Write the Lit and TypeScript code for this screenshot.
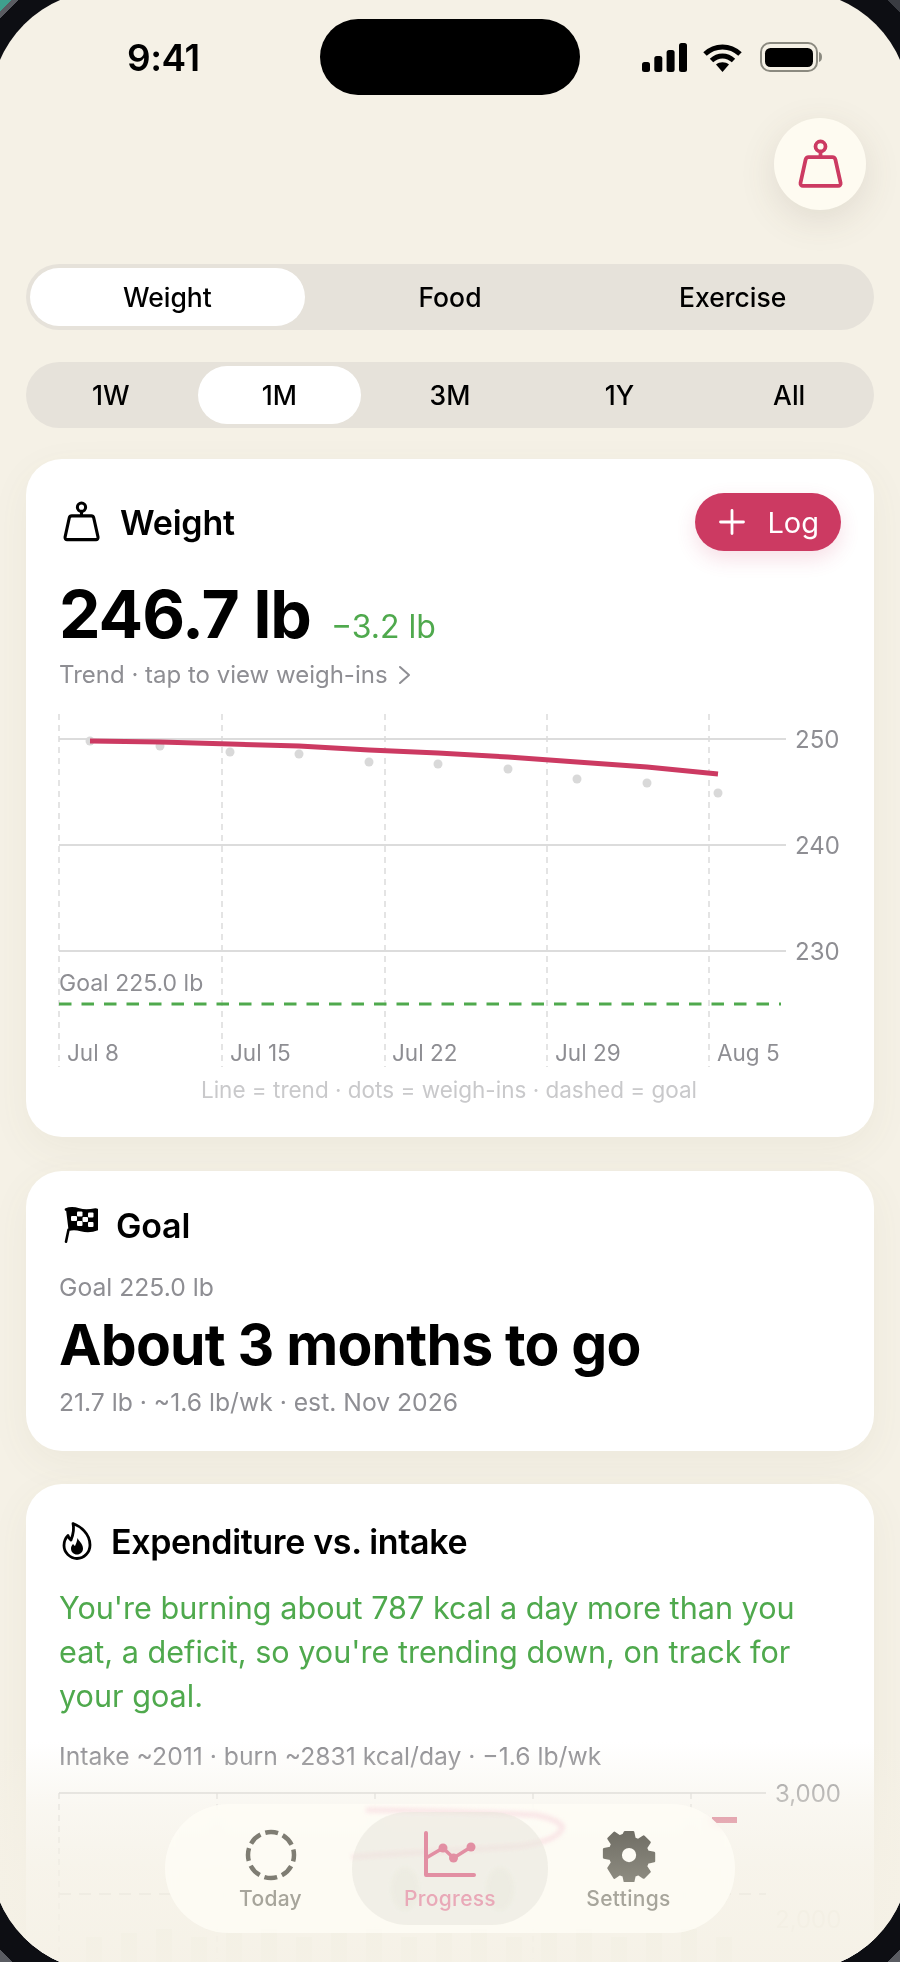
import { LitElement, css, html, svg } from "lit";
import { customElement } from "lit/decorators.js";

const trend = "90,741 160,742 230,744 299,746 369,750 438,753 508,757 577,762 647,767 718,774";
const dots = [
  [90, 741], [160, 746], [230, 752], [299, 754], [369, 762],
  [438, 764], [508, 769], [577, 779], [647, 783], [718, 793],
];
const weekTicks = [59, 222, 385, 547, 709];

const weightIcon = (color: string, width: number) => html`
  <svg viewBox="0 0 36 40" width=${width} height=${width * 1.111} fill="none" stroke=${color} stroke-width="3" stroke-linejoin="round">
    <circle cx="18" cy="6" r="4"></circle>
    <path d="M18 10v4"></path>
    <path d="M8.5 14.5h19a2.5 2.5 0 0 1 2.4 1.9l4.2 18.8a2 2 0 0 1-2 2.4H4a2 2 0 0 1-2-2.4L6.100 16.400a2.500 2.500 0 0 1 2.400-1.900z"></path>
  </svg>
`;

@customElement("app-root")
export class AppRoot extends LitElement {
  static styles = css`
    :host {
      display: block;
      position: relative;
      width: 900px;
      height: 1962px;
      overflow: hidden;
      background:
        linear-gradient(135deg, #3fa08e 0 8px, #5a5c62 8px 13px, transparent 13px),
        linear-gradient(45deg, #5a5c62 0 9px, transparent 9px),
        linear-gradient(225deg, #3a3c42 0 9px, transparent 9px),
        linear-gradient(315deg, #5a5c62 0 9px, transparent 9px),
        #0d0e13;
      font-family: Inter, "Liberation Sans", sans-serif;
      color: #000;
    }

    /* screen is a bit bigger than the window so only part of its corner arc shows */
    .screen {
      position: relative;
      box-sizing: border-box;
      width: 920px;
      height: 1982px;
      margin: -10px;
      padding: 10px;
      overflow: hidden;
      border-radius: 117px;
      background: #f5f1e6;
      filter: blur(0.4px);
    }

    .status {
      display: grid;
      grid-template-columns: 320px 260px 320px;
      align-items: center;
      height: 76px;
      margin-top: 19px;
    }

    .time {
      padding-left: 127px;
      font-size: 37px;
      font-weight: 600;
      letter-spacing: -0.5px;
    }

    .island {
      height: 76px;
      border-radius: 38px;
      background: #000;
    }

    .status-icons {
      display: flex;
      align-items: center;
      gap: 16px;
      padding-left: 62px;
    }

    .battery {
      margin-left: 2px;
    }

    .top-action {
      display: flex;
      justify-content: flex-end;
      margin-top: 23px;
      padding-right: 34px;
    }

    .round-btn {
      display: grid;
      place-items: center;
      width: 92px;
      height: 92px;
      border-radius: 50%;
      background: #fefbf1;
      box-shadow: 0 10px 36px rgba(90, 80, 60, 0.13);
    }

    .tabs {
      display: grid;
      margin: 0 26px;
      height: 66px;
      border-radius: 33px;
      background: #e6e2da;
      align-items: center;
      font-size: 26.500px;
      font-weight: 500;
      text-align: center;
    }

    .tabs.kinds {
      grid-template-columns: repeat(3, 1fr);
      margin-top: 54px;
    }

    .tabs.ranges {
      grid-template-columns: repeat(5, 1fr);
      margin-top: 32px;
    }

    .tab {
      display: grid;
      place-items: center;
      height: 58px;
      margin: 0 4px;
      border-radius: 29px;
    }

    .tab.on {
      background: #fff;
    }

    .ranges .tab.on {
      margin-left: 2px;
    }

    .card {
      margin: 0 26px;
      border-radius: 36px;
      background: #fff;
      box-shadow: 0 12px 40px rgba(110, 95, 60, 0.06);
    }

    .weight-card {
      height: 678px;
      margin-top: 31px;
      padding: 34px 33px 0;
      box-sizing: border-box;
    }

    .card-head {
      display: flex;
      align-items: center;
      gap: 20px;
      font-size: 34px;
      font-weight: 600;
      letter-spacing: -0.2px;
    }

    .weight-head {
      justify-content: space-between;
      height: 58px;
    }

    .title {
      display: flex;
      align-items: center;
      gap: 20px;
      padding-left: 4px;
    }

    .log {
      display: flex;
      align-items: center;
      gap: 22px;
      height: 58px;
      padding: 0 22px 0 24px;
      border-radius: 29px;
      background: #cc3a62;
      color: #fff;
      font-size: 29px;
      font-weight: 400;
      letter-spacing: 0;
      box-shadow: 0 8px 20px rgba(204, 58, 98, 0.16);
    }

    .reading {
      display: flex;
      align-items: baseline;
      gap: 20px;
      margin-top: 24px;
      line-height: 78px;
      font-size: 66px;
      font-weight: 700;
      letter-spacing: -1px;
    }

    .delta {
      color: #4fa94d;
      font-size: 32px;
      font-weight: 400;
      letter-spacing: 0;
    }

    .muted {
      color: #8e8e93;
      font-size: 24.700px;
      line-height: 32px;
    }

    .trend-note {
      display: flex;
      align-items: center;
      gap: 10px;
      margin-top: -7px;
      font-size: 24px;
    }

    .chart {
      display: block;
      margin-left: -59px;
      overflow: visible;
    }

    .chart.weight {
      margin-top: 14.500px;
    }

    .chart.burn {
      margin-top: 11px;
    }

    .chart text {
      font-family: Inter, "Liberation Sans", sans-serif;
    }

    .goal-card {
      height: 280px;
      margin-top: 34px;
      padding: 36px 33px 0;
      box-sizing: border-box;
    }

    .goal-head {
      gap: 18px;
      padding-left: 4px;
      height: 36px;
    }

    .goal-for {
      margin-top: 28px;
    }

    .goal-big {
      margin-top: 3px;
      font-size: 57px;
      font-weight: 700;
      line-height: 78px;
      letter-spacing: -0.8px;
    }

    .goal-sub {
      margin-top: 2px;
    }

    .burn-card {
      height: 560px;
      margin-top: 33px;
      padding: 38px 33px 0;
      box-sizing: border-box;
    }

    .burn-head {
      gap: 19px;
      padding-left: 3px;
      height: 38px;
      letter-spacing: -0.35px;
    }

    .burn-text {
      margin: 26px 0 0;
      color: #4fa94d;
      font-size: 30.600px;
      line-height: 44px;
    }

    .burn-sub {
      margin-top: 21.500px;
    }

    .fade {
      position: absolute;
      left: 0;
      right: 0;
      bottom: 0;
      height: 230px;
      background: linear-gradient(
        to bottom,
        rgba(245, 241, 230, 0) 0%,
        rgba(245, 241, 230, 0.55) 28%,
        rgba(245, 241, 230, 0.82) 55%,
        rgba(245, 241, 230, 0.97) 100%
      );
    }

    .nav {
      position: absolute;
      left: 175px;
      top: 1814px;
      display: grid;
      grid-template-columns: 187px 196px 187px;
      width: 570px;
      height: 129px;
      border-radius: 64px;
      background: rgba(255, 253, 246, 0.72);
      backdrop-filter: blur(6px);
      overflow: hidden;
    }

    .glass {
      position: absolute;
      left: 0;
      top: 0;
      filter: blur(2px);
    }

    .nav-item {
      position: relative;
      display: flex;
      flex-direction: column;
      align-items: center;
      gap: 4px;
      height: 113px;
      margin-top: 8px;
      padding-top: 16px;
      box-sizing: border-box;
      border-radius: 56px;
      color: #a7a59b;
      font-size: 21px;
      font-weight: 500;
      letter-spacing: 0.3px;
    }

    .nav-item svg {
      display: block;
    }

    .nav-item.today {
      margin-left: 12px;
      margin-right: -12px;
    }

    .nav-item.on {
      background: rgba(232, 229, 220, 0.55);
      color: #e9a9b8;
    }

    .nav-item.settings {
      margin-left: -13px;
      margin-right: 13px;
    }
  `;

  private weightChart() {
    return html`
      <svg class="chart weight" width="860" height="400" viewBox="0 706 860 400">
        ${weekTicks.map(
          (x) => svg`<line x1=${x} x2=${x} y1="714" y2="1067" stroke="#d2d2d2" stroke-width="1.200" stroke-dasharray="6 5"></line>`
        )}
        ${[739, 845, 951].map(
          (y) => svg`<line x1="59" x2="786" y1=${y} y2=${y} stroke="#dcdcdc" stroke-width="2"></line>`
        )}
        ${[[739, "250"], [845, "240"], [951, "230"]].map(
          ([y, label]) => svg`<text x="795" y=${Number(y) + 9} font-size="24" fill="#8e8e93">${label}</text>`
        )}
        <text x="59" y="991" font-size="23" fill="#8e8e93">Goal 225.0 lb</text>
        <line x1="59" x2="781" y1="1004" y2="1004" stroke="#4fa94d" stroke-width="3" stroke-dasharray="12.500 10"></line>
        ${dots.map(([x, y]) => svg`<circle cx=${x} cy=${y} r="4.500" fill="#d9d9d9"></circle>`)}
        <polyline points=${trend} fill="none" stroke="#cc3a62" stroke-width="5"></polyline>
        ${[[67, "Jul 8"], [230, "Jul 15"], [392, "Jul 22"], [555, "Jul 29"], [717, "Aug 5"]].map(
          ([x, label]) => svg`<text x=${x} y="1061" font-size="22.500" fill="#8e8e93">${label}</text>`
        )}
        <text x="449" y="1098" font-size="22.500" fill="#c9c9cb" text-anchor="middle">Line = trend · dots = weigh-ins · dashed = goal</text>
      </svg>
    `;
  }

  private burnChart() {
    return html`
      <svg class="chart burn" width="860" height="190" viewBox="0 1784 860 190">
        <line x1="59" x2="766" y1="1794" y2="1794" stroke="#dcdcdc" stroke-width="2"></line>
        ${[59, 217, 375, 533, 691].map(
          (x) => svg`<line x1=${x} x2=${x} y1="1794" y2="1960" stroke="#d2d2d2" stroke-width="1.200" stroke-dasharray="6 5"></line>`
        )}
        <line x1="59" x2="766" y1="1895" y2="1895" stroke="#cfcfcf" stroke-width="2" stroke-dasharray="12 8"></line>
        <text x="775" y="1803" font-size="24" fill="#8e8e93">3,000</text>
        <text x="775" y="1929" font-size="24" fill="#e6e4da">2,000</text>
        <line x1="712" x2="737" y1="1821" y2="1821" stroke="#cc3a62" stroke-width="6"></line>
        ${Array.from({ length: 19 }, (_, i) => i).map(
          (i) => svg`<rect x=${86 + i * 35} y=${1938 - (i % 3) * 4} width="16" height="34" fill="#e6ebdc"></rect>`
        )}
      </svg>
    `;
  }

  protected override render() {
    return html`
      <div class="screen">
        <div class="status">
          <div class="time">9:41</div>
          <div class="island"></div>
          <div class="status-icons">
            <svg width="45" height="29" viewBox="0 0 45 29" fill="#000">
              <rect x="0" y="19" width="8" height="10" rx="2.500"></rect>
              <rect x="12.300" y="13" width="8" height="16" rx="2.500"></rect>
              <rect x="24.600" y="7" width="8" height="22" rx="2.500"></rect>
              <rect x="37" y="0" width="8" height="29" rx="2.500"></rect>
            </svg>
            <svg width="39" height="29" viewBox="0 0 39 29" fill="none" stroke="#000" stroke-width="5">
              <path d="M2 11c10-9.500 25-9.500 35 0"></path>
              <path d="M8.500 17.500c6.500-6 15.500-6 22 0"></path>
              <path d="M19.500 29l-6.500-7.500c3.500-3 9.500-3 13 0z" fill="#000" stroke="none"></path>
            </svg>
            <svg class="battery" width="62" height="30" viewBox="0 0 62 30">
              <rect x="1" y="1" width="56" height="28" rx="9" fill="none" stroke="#8b8a80" stroke-width="2"></rect>
              <rect x="5" y="6" width="48" height="19" rx="5.500" fill="#000"></rect>
              <path d="M59 10c2 .5 3 2.500 3 5s-1 4.500-3 5z" fill="#8b8a80"></path>
            </svg>
          </div>
        </div>

        <div class="top-action">
          <div class="round-btn">${weightIcon("#cc3a62", 45)}</div>
        </div>

        <div class="tabs kinds">
          <div class="tab on">Weight</div>
          <div class="tab">Food</div>
          <div class="tab">Exercise</div>
        </div>

        <div class="tabs ranges">
          <div class="tab">1W</div>
          <div class="tab on">1M</div>
          <div class="tab">3M</div>
          <div class="tab">1Y</div>
          <div class="tab">All</div>
        </div>

        <section class="card weight-card">
          <div class="card-head weight-head">
            <div class="title">${weightIcon("#000", 37)}<span>Weight</span></div>
            <div class="log">
              <svg width="26" height="26" viewBox="0 0 26 26" stroke="#fff" stroke-width="2.800" stroke-linecap="round">
                <path d="M13 1.500v23M1.500 13h23"></path>
              </svg>
              <span>Log</span>
            </div>
          </div>
          <div class="reading"><span>246.7 lb</span><span class="delta">−3.2 lb</span></div>
          <div class="muted trend-note">
            <span>Trend · tap to view weigh-ins</span>
            <svg width="13" height="20" viewBox="0 0 13 20" fill="none" stroke="#8e8e93" stroke-width="2" stroke-linecap="round" stroke-linejoin="round">
              <path d="M2 2l9 8-9 8"></path>
            </svg>
          </div>
          ${this.weightChart()}
        </section>

        <section class="card goal-card">
          <div class="card-head goal-head">
            <svg width="35" height="36" viewBox="0 0 35 36">
              <path d="M3 2.500c5-2 8-1.500 13 0s9 1.500 16.500 0c1.200 0 2 .8 2 2v17.500c-6 2.500-11 2.500-16.500 1s-8-1.500-12.500-.3l-2.500 12" fill="none" stroke="#000" stroke-width="2.600" stroke-linecap="round" stroke-linejoin="round"></path>
              <path d="M3 2.500c5-2 8-1.500 13 0s9 1.500 16.500 0c1.200 0 2 .8 2 2v17.500c-6 2.500-11 2.500-16.500 1s-8-1.500-12.500-.3z" fill="#000"></path>
              <g fill="#fff">
                <rect x="8" y="9" width="6" height="5" rx="1"></rect>
                <rect x="14" y="4.500" width="5.500" height="5" rx="1"></rect>
                <rect x="25" y="5.500" width="5.500" height="5" rx="1"></rect>
                <rect x="19.500" y="10" width="5.500" height="5" rx="1"></rect>
                <rect x="14" y="14" width="5.500" height="5" rx="1"></rect>
                <rect x="25" y="15" width="5.500" height="5" rx="1"></rect>
              </g>
            </svg>
            <span>Goal</span>
          </div>
          <div class="muted goal-for">Goal 225.0 lb</div>
          <div class="goal-big">About 3 months to go</div>
          <div class="muted goal-sub">21.7 lb · ~1.6 lb/wk · est. Nov 2026</div>
        </section>

        <section class="card burn-card">
          <div class="card-head burn-head">
            <svg width="30" height="38" viewBox="0 0 30 38" fill="none" stroke="#000" stroke-width="2.800" stroke-linejoin="round">
              <path d="M11 1.500c7 2.500 17 10 17 21.500 0 7.500-6 13.500-13 13.500S2 30.500 2 23.500c0-4 1.500-7.500 4-10 .5 2 1.500 3.500 3 4.500 2-5 3.500-10.500 2-16.500z"></path>
              <path d="M15.500 16c1 3 5.500 5.500 5.500 10.500 0 3.500-2.700 6-6 6s-6-2.500-6-6c0-2 1-3.500 2.200-4.500.4 1 1 1.700 1.800 2 1.300-2.500 2-5 2.500-8z" fill="#000" stroke="none"></path>
            </svg>
            <span>Expenditure vs. intake</span>
          </div>
          <p class="burn-text">You're burning about 787 kcal a day more than you eat, a deficit, so you're trending down, on track for your goal.</p>
          <div class="muted burn-sub">Intake ~2011 · burn ~2831 kcal/day · −1.6 lb/wk</div>
          ${this.burnChart()}
        </section>

        <div class="fade"></div>

        <nav class="nav">
          <svg class="glass" width="570" height="129" viewBox="0 0 570 129" fill="none" stroke="#f6cfd9" stroke-width="5">
            <path d="M201 6c80 1 130 3 170 5 20 4 28 10 26 14-5 10-22 14-40 17-50 4-110 6-170 11" opacity="0.55"></path>
            <ellipse cx="240" cy="85" rx="14" ry="22" fill="#e3ebd6" stroke="none" opacity="0.4"></ellipse>
            <ellipse cx="335" cy="85" rx="14" ry="22" fill="#e3ebd6" stroke="none" opacity="0.4"></ellipse>
          </svg>
          <div class="nav-item today">
            <svg width="54" height="54" viewBox="0 0 54 54" fill="none" stroke="#7f7d73" stroke-width="4.500">
              <circle cx="27" cy="27" r="23" stroke-dasharray="13 5.060" stroke-dashoffset="6.500"></circle>
            </svg>
            <span>Today</span>
          </div>
          <div class="nav-item on">
            <svg width="54" height="54" viewBox="0 0 54 54" fill="none" stroke="#e28fa3" stroke-width="3.500" stroke-linecap="round" stroke-linejoin="round">
              <path d="M3 5v42h48" stroke-width="4"></path>
              <path d="M3 30l17-10 10.500 10 17.500-11"></path>
              <g fill="#e28fa3" stroke="none">
                <circle cx="20" cy="20" r="4.500"></circle>
                <circle cx="30.500" cy="30" r="4.500"></circle>
                <circle cx="48" cy="19" r="4.500"></circle>
              </g>
            </svg>
            <span>Progress</span>
          </div>
          <div class="nav-item settings">
            <svg width="54" height="54" viewBox="0 0 54 54">
              <defs>
                <linearGradient id="gear" gradientUnits="userSpaceOnUse" x1="0" y1="0" x2="0" y2="54">
                  <stop offset="0" stop-color="#6f6d64"></stop>
                  <stop offset="1" stop-color="#8d8b80"></stop>
                </linearGradient>
              </defs>
              <path transform="translate(2.200 2.200) scale(0.92)" fill="url(#gear)" stroke="url(#gear)" stroke-width="2.500" stroke-linejoin="round" fill-rule="evenodd" d="M22.500 2h9l1.500 7 4 1.700 6-3.900 6.400 6.400-3.900 6 1.700 4 7 1.500v9l-7 1.500-1.700 4 3.900 6-6.400 6.400-6-3.900-4 1.700-1.500 7h-9l-1.500-7-4-1.700-6 3.900L4.600 41.200l3.900-6-1.700-4-7-1.500v-9l7-1.500 1.700-4-3.900-6 6.400-6.400 6 3.900 4-1.700zM27 18a9 9 0 1 0 0 18 9 9 0 0 0 0-18z"></path>
            </svg>
            <span>Settings</span>
          </div>
        </nav>
      </div>
    `;
  }
}
